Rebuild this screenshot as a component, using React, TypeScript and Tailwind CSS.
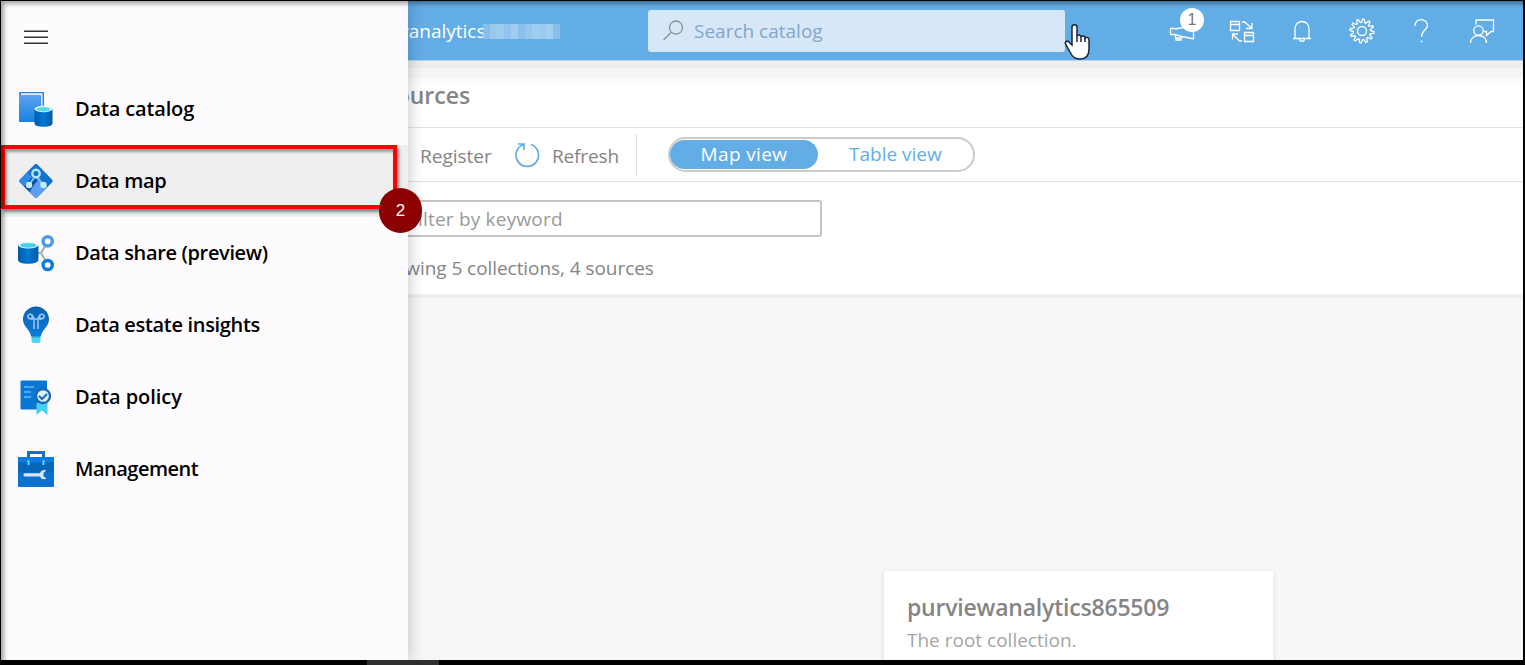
import type { ReactNode } from "react";

const CatalogIcon = () => (
  <svg width="36" height="36" viewBox="0 0 36 36">
    <defs>
      <linearGradient id="book" x1="0" y1="0" x2="0" y2="1"><stop offset="0" stopColor="#5ea0ef" /><stop offset="1" stopColor="#1683e0" /></linearGradient>
      <linearGradient id="cyl" x1="0" x2="1"><stop offset="0" stopColor="#005ba1" /><stop offset=".5" stopColor="#0078d4" /><stop offset="1" stopColor="#005ba1" /></linearGradient>
    </defs>
    <path d="M2 1h24v30H2a1 1 0 0 1-1-1V2a1 1 0 0 1 1-1z" fill="#2b87dc" />
    <path d="M3 2.200h21.500V29h-1.500V4.500H3z" fill="#e6f2fd" />
    <path d="M1 4h21.500v27H2a1 1 0 0 1-1-1z" fill="url(#book)" />
    <path d="M16.500 18v14.500c0 2 4 3.300 9 3.300s9-1.300 9-3.300V18z" fill="url(#cyl)" />
    <ellipse cx="25.500" cy="18" rx="9" ry="3.300" fill="#e8f6fb" />
    <ellipse cx="25.500" cy="18.300" rx="7" ry="2.200" fill="#50d8ec" />
  </svg>
);

const MapIcon = () => (
  <svg width="36" height="36" viewBox="0 0 36 36">
    <path d="M16.800 1.300a1.700 1.700 0 0 1 2.400 0l15 15.500a1.700 1.700 0 0 1 0 2.400l-15 15.300a1.700 1.700 0 0 1-2.400 0l-15-15.300a1.700 1.700 0 0 1 0-2.400z" fill="#1272cd" />
    <path d="M18 14 29 24 19.200 34.500a1.700 1.700 0 0 1-2.400 0L12 29.500z" fill="#5b9ff0" />
    <path d="M6 23.500 14 14l6 3-9 11.500z" fill="#0a56a6" />
    <path d="M1.500 17 9 9.500l5 4.500-8 9.500-4.500-4.500z" fill="#2f8ae6" />
    <path d="M16.500 14 11 22M19.500 14 25 22" stroke="#7fc0f8" strokeWidth="2" />
    <circle cx="18" cy="10.500" r="3.700" fill="#1170c9" stroke="#aee6fc" strokeWidth="2.400" />
    <circle cx="11" cy="22" r="3.200" fill="#c4ecff" />
    <circle cx="25.500" cy="22" r="3.200" fill="#c4ecff" />
  </svg>
);

const ShareIcon = () => (
  <svg width="38" height="38" viewBox="0 0 38 38">
    <path d="M19 19h5l7-12M24 19l7 12" fill="none" stroke="#a9aaae" strokeWidth="2" />
    <path d="M1 11v15c0 2.200 4.500 3.800 10.200 3.800s10.200-1.600 10.200-3.800V11z" fill="url(#cyl)" />
    <ellipse cx="11.200" cy="11" rx="10.200" ry="3.500" fill="#e8f6fb" />
    <ellipse cx="11.200" cy="11.300" rx="8" ry="2.400" fill="#42d1ea" />
    <circle cx="30.700" cy="7.300" r="4.600" fill="#fff" stroke="#4c9bf0" strokeWidth="3.500" />
    <circle cx="30.700" cy="31" r="4.600" fill="#fff" stroke="#0a7be0" strokeWidth="3.500" />
  </svg>
);

const InsightsIcon = () => (
  <svg width="36" height="38" viewBox="0 0 36 38">
    <defs>
      <linearGradient id="bulb" x1="0" y1="0" x2="0" y2="1"><stop offset="0" stopColor="#0b62b4" /><stop offset="1" stopColor="#0d7bd8" /></linearGradient>
    </defs>
    <path d="M31 13.500C31 6 25.200.5 18 .5S5 6 5 13.500c0 7 6.500 9.500 8 16.500h10c1.500-7 8-9.500 8-16.500z" fill="url(#bulb)" />
    <path d="M13.500 30h9v5a2 2 0 0 1-2 2h-5a2 2 0 0 1-2-2z" fill="#4fd5ee" />
    <path d="M13.500 30h9v1.500h-9z" fill="#2a9fd0" />
    <g fill="none" stroke="#9ac8f2" strokeWidth="1.500">
      <circle cx="12.200" cy="10.500" r="2.200" /><circle cx="23.800" cy="10.500" r="2.200" />
      <path d="M14.400 9.500c1.600 1.500 1.600 3 1.600 5V23M21.600 9.500c-1.600 1.500-1.600 3-1.600 5V23M12 13h12" />
    </g>
  </svg>
);

const PolicyIcon = () => (
  <svg width="36" height="36" viewBox="0 0 36 36">
    <rect x="2.500" y="1.500" width="26.500" height="29" rx="1" fill="#0a77d5" />
    <path d="M6 8h10M6 13h7M6 18h7" stroke="#6bb8f5" strokeWidth="1.500" />
    <path d="M18.500 24h11v12l-5.500-4.500-5.500 4.500z" fill="#4bcdf0" />
    <circle cx="25" cy="17" r="7" fill="#d9f2fe" stroke="#1a67b0" strokeWidth="2.300" />
    <path d="m21 17 3 3 5-5" fill="none" stroke="#1a67b0" strokeWidth="2" />
  </svg>
);

const ManagementIcon = () => (
  <svg width="36" height="38" viewBox="0 0 36 38">
    <path d="M10.500 8V2.500h15V8" fill="none" stroke="#0c72cf" strokeWidth="3" />
    <rect y="7" width="36" height="30" rx="1" fill="#0a73cf" />
    <rect y="7" width="36" height="5.500" rx="1" fill="#0a7be0" />
    <rect y="12.500" width="36" height="10" fill="#075fae" opacity=".65" />
    <path d="M9.500 10h2v5h-2zM24.500 10h2v5h-2z" fill="#4fe0f0" />
    <path d="M7 23.200h15c1.200-3.500 4.500-3.500 6.500-2.600l-3 2.100v3.800l3 2.100c-2 1-5.300.9-6.500-2.200H7a1.600 1.600 0 0 1 0-3.200z" fill="#dce6f0" />
  </svg>
);

const NavItem = ({ icon, label, tracking, active = false }: { icon: ReactNode; label: string; tracking: string; active?: boolean }) => (
  <li className={active ? "flex h-[72px] items-center bg-[#efefef]" : "flex h-[72px] items-center"}>
    <span className="flex w-[70px] shrink-0 items-center justify-center">{icon}</span>
    <span className={`ml-1 whitespace-nowrap text-[20px] font-semibold text-black ${tracking}`}>{label}</span>
  </li>
);

const HeaderIcon = ({ children }: { children: ReactNode }) => (
  <span className="flex w-[60px] items-center justify-center">
    <svg width="30" height="30" viewBox="0 0 30 30" fill="none" stroke="#fff" strokeWidth="1.300">{children}</svg>
  </span>
);

const gearPath = Array.from({ length: 48 }, (_, i) => {
  const r = i % 4 < 2 ? 12 : 8.6;
  const a = ((i + 0.5) * Math.PI * 2) / 48;
  return `${i ? "L" : "M"}${(15 + r * Math.sin(a)).toFixed(2)} ${(15 - r * Math.cos(a)).toFixed(2)}`;
}).join("") + "Z";

const blurTiles = ["#8ec4ee", "#a6d0f1", "#b0d5f2", "#9fccf0", "#b2d6f3", "#94c6ee", "#a3cff1", "#b0d5f3", "#a9d2f2", "#b4d8f4", "#8fc4ee"];

function Header() {
  return (
    <header className="flex h-[60px] shrink-0 items-center border-b border-[#b4d5f0] bg-[#63ade7]">
      <div className="flex w-[647px] shrink-0 items-center pl-[337px] pt-px">
        <span className="text-[19px] text-white">purviewanalytics</span>
        <span className="-ml-[3px] flex h-[15px] w-[77px] opacity-80">
          {blurTiles.map((c, i) => <span key={i} className="flex-1" style={{ backgroundColor: c }} />)}
        </span>
      </div>
      <div className="flex h-[42px] w-[417px] shrink-0 items-center rounded-[3px] bg-[#d6e7f7]">
        <svg className="ml-[14px]" width="24" height="24" viewBox="0 0 24 24" fill="none" stroke="#919294" strokeWidth="1.300"><circle cx="14" cy="8.500" r="6.500" /><path d="M9.300 13.200 1.500 21" /></svg>
        <span className="ml-[8px] pt-[2px] text-[19px] text-[#82a6cb]">Search catalog</span>
      </div>
      <div className="ml-auto mr-[11px] flex">
        <span className="relative flex">
          <HeaderIcon><path d="M8 12.500H3.500v6H8l7 2 11.500 2.500V11.500H16l-8 1.500M8.500 19v3H13l3-1M9 22.500v1.500h5v-2" /></HeaderIcon>
          <span className="absolute left-[28px] top-[-8px] flex h-6 w-6 items-center justify-center rounded-full bg-white font-['Liberation_Sans'] text-[16px] text-[#777]">1</span>
        </span>
        <HeaderIcon><path d="M3.500 5.500h9v9h-9zM3.500 8.500h9M17.500 16.500h9v9h-9zM17.500 19.500h9M15 6h2.500l7 6M25 7v5.500h-6M5.500 23.500V18H11M6 18.500l6.500 6.500H15" /></HeaderIcon>
        <HeaderIcon><path d="M6 22.500h18M8 22V12.500a7 7 0 0 1 14 0V22M12.500 23c0 3 5 3 5 0" /></HeaderIcon>
        <HeaderIcon><path d={gearPath} /><circle cx="15" cy="15" r="4.500" /></HeaderIcon>
        <HeaderIcon><path d="M8 10c0-9 12.500-8 12.500-.5C20.500 14 14.500 14 14.500 21M14.500 24.500v2" /></HeaderIcon>
        <HeaderIcon><circle cx="11.500" cy="14.500" r="4.700" /><path d="M3.500 27c0-10 16-10 16 0M9 8.500V4h17.500v11.500H24l-4.500 4v-4H17" /></HeaderIcon>
      </div>
    </header>
  );
}

function Drawer() {
  return (
    <aside className="absolute inset-y-0 left-0 w-[407px] bg-[#fefbff] shadow-[2px_0_14px_rgba(0,0,0,0.20)]">
      <div className="flex h-[72px] items-center pl-[23px]">
        <svg width="24" height="16" viewBox="0 0 24 16" stroke="#333" strokeWidth="1.500"><path d="M0 2.300h24M0 8.300h24M0 14.300h24" /></svg>
      </div>
      <ul>
        <NavItem icon={<CatalogIcon />} label="Data catalog" tracking="tracking-[-0.15px]" />
        <NavItem icon={<MapIcon />} label="Data map" tracking="tracking-[-0.35px]" active />
        <NavItem icon={<ShareIcon />} label="Data share (preview)" tracking="tracking-[-0.35px]" />
        <NavItem icon={<InsightsIcon />} label="Data estate insights" tracking="tracking-[-0.32px]" />
        <NavItem icon={<PolicyIcon />} label="Data policy" tracking="tracking-[-0.05px]" />
        <NavItem icon={<ManagementIcon />} label="Management" tracking="tracking-[-0.5px]" />
      </ul>
      <div className="absolute left-0 top-[144px] h-[64px] w-[396px] border-4 border-[#f00] shadow-[2px_3px_3px_rgba(0,0,0,0.45),inset_2px_3px_3px_rgba(0,0,0,0.35)]" />
      <span className="absolute left-[378px] top-[187px] flex h-[45px] w-[43px] items-center justify-center rounded-full bg-[#8b0000] font-['Liberation_Sans'] text-[17px] text-white">2</span>
    </aside>
  );
}

export default function App() {
  return (
    <div className="flex h-[665px] w-[1525px] flex-col overflow-hidden bg-black pl-px pr-[2px] pt-px font-['Open_Sans',sans-serif]">
      <div className="relative flex h-[659px] flex-col overflow-hidden bg-[#f7f7f7]">
        <Header />
        <main className="flex flex-1 flex-col text-[#858585]">
          <section className="h-[237px] shrink-0 border-b-4 border-[#efedef] bg-white">
            <div className="flex h-[24px] flex-col">
              <div className="h-[7px] bg-[#ededed]" />
              <div className="h-[10px] bg-[#f5f4f6]" />
              <div className="h-[7px] bg-[#fefbff]" />
            </div>
            <h1 className="flex h-[43px] items-center border-b border-[#e2e2e2] pb-[21px] pl-[382px] text-[23px] font-semibold">Sources</h1>
            <div className="flex h-[54px] items-center border-b border-[#e2e2e2] pl-[419px]">
              <span className="w-[95px] pt-[3px] text-[19px]">Register</span>
              <svg width="26" height="28" viewBox="0 0 26 28" fill="none" stroke="#63ade7" strokeWidth="1.700"><path d="M16 3.500A11.300 11.300 0 1 1 8.500 3.500M3 3h6v6" /></svg>
              <span className="ml-[11px] pt-[3px] text-[19px] tracking-[-0.15px]">Refresh</span>
              <span className="ml-[17px] h-[42px] w-px bg-[#ddd]" />
              <div className="ml-[31px] flex h-[35px] w-[307px] items-center rounded-full border-2 border-[#cfc9c9] text-[19px]">
                <span className="flex h-[29px] w-[148px] items-center justify-center rounded-full bg-[#63ade7] tracking-[0.35px] text-white">Map view</span>
                <span className="flex flex-1 items-center justify-center text-[#63ade7]">Table view</span>
              </div>
            </div>
            <div className="ml-[380px] mt-[18px] flex h-[37px] w-[441px] items-center rounded-[3px] border-2 border-[#c8c2c0] pl-[25px] pt-px text-[19px] tracking-[0.2px] text-[#999]">Filter by keyword</div>
            <p className="ml-[371px] mt-[17px] text-[19px] tracking-[-0.06px]">Showing 5 collections, 4 sources</p>
          </section>
          <section className="flex flex-1 flex-col overflow-hidden pl-[883px] pt-[273px]">
            <article className="h-[110px] w-[389px] shrink-0 bg-white pl-[23px] pt-[20px] shadow-[0_1px_5px_rgba(0,0,0,0.10)]">
              <h2 className="text-[23px] font-semibold leading-[32px] tracking-[-0.2px]">purviewanalytics865509</h2>
              <p className="text-[19px] leading-[34px] text-[#a5a5a5]">The root collection.</p>
            </article>
          </section>
        </main>
        <Drawer />
        <svg className="absolute left-[1062px] top-[22px]" width="28" height="38" viewBox="0 0 28 38"><path d="M9 4c0-3 5-3 5 0v9c1-2 4-1 4 1 1-2 4-1 4 1 1-1 4-1 4 2v9c0 6-3 10-9 10-6 0-8-3-10-7l-4-7c-2-3 1-5 3-3l3 3z" fill="#fff" stroke="#18263a" strokeWidth="1.500" /><path d="M14 12v7M18 14v5M22 15v4" stroke="#18263a" strokeWidth="1.500" /></svg>
        <div className="pointer-events-none absolute inset-0 shadow-[inset_3px_3px_4px_rgba(0,0,0,0.35)]" />
      </div>
      <div className="ml-[366px] h-[5px] w-[72px] bg-[#303030]" />
    </div>
  );
}
